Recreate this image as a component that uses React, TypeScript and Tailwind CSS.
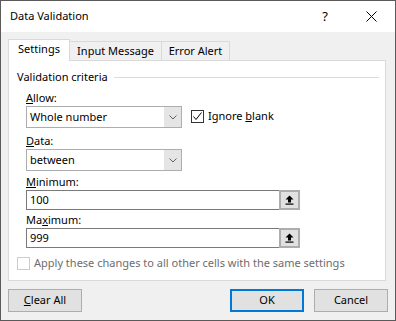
import React from "react";

const font = { fontFamily: '"Noto Sans", "Open Sans", sans-serif' };

function Chevron() {
  return (
    <svg width="8" height="5" viewBox="0 0 8 5" className="block">
      <polyline points="0.5,0.5 4,4 7.5,0.5" fill="none" stroke="#606060" strokeWidth="1" />
    </svg>
  );
}

function Select({ value }: { value: string }) {
  return (
    <div className="w-[156px] h-[22px] border border-[#adadad] bg-white flex">
      <div className="flex-1 pl-[3px] flex items-center text-[11px] leading-[16px] text-black">{value}</div>
      <div className="w-[17px] bg-[#e5e5e5] flex items-center justify-center">
        <Chevron />
      </div>
    </div>
  );
}

function RangeInput({ value }: { value: string }) {
  return (
    <div className="w-[274px] h-[20px] border border-[#7a7a7a] bg-white flex">
      <div className="flex-1 pl-[3px] flex items-center text-[11px] leading-[16px] text-black">{value}</div>
      <div className="w-[21px] -my-px -mr-px border-2 border-[#adadad] bg-[#e1e1e1] flex items-center justify-center">
        <svg width="9" height="10" viewBox="0 0 9 10" className="block">
          <polygon points="4.5,0.5 8.5,4.5 6,4.5 6,7.5 3,7.5 3,4.5 0.5,4.5" fill="#000" />
          <rect x="0.5" y="8.5" width="8" height="1.2" fill="#000" />
        </svg>
      </div>
    </div>
  );
}

function Label({ children, className = "" }: { children: React.ReactNode; className?: string }) {
  return <div className={`h-[16px] leading-[16px] text-[11px] text-black ${className}`}>{children}</div>;
}

function Btn({ children, primary = false }: { children: React.ReactNode; primary?: boolean }) {
  return (
    <div
      className={`w-[74px] h-[23px] flex items-center justify-center text-[11px] text-black bg-[#e1e1e1] ${
        primary ? "border-2 border-[#0078d7]" : "border border-[#adadad]"
      }`}
    >
      {children}
    </div>
  );
}

export default function App() {
  return (
    <div style={font} className="w-[396px] h-[321px] flex flex-col border border-[#5a5a5a] bg-[#f0f0f0] overflow-hidden">
      {/* Title bar */}
      <div className="h-[31px] bg-white flex items-center pl-[9px] shrink-0">
        <span className="text-[11px] text-black">Data Validation</span>
        <span className="ml-auto text-[13px] text-black mr-[38px]">?</span>
        <svg width="11" height="11" viewBox="0 0 11 11" className="mr-[18px] block">
          <line x1="0.5" y1="0.5" x2="10.5" y2="10.5" stroke="#000" strokeWidth="1" />
          <line x1="10.5" y1="0.5" x2="0.5" y2="10.5" stroke="#000" strokeWidth="1" />
        </svg>
      </div>

      {/* Body */}
      <div className="flex-1 px-[7px] pt-[7px] flex flex-col">
        {/* Tabs */}
        <div className="h-[21px] flex items-end">
          <div className="relative z-10 w-[62px] h-[22px] -mb-px bg-white border-l border-t border-r border-[#d9d9d9] flex items-center justify-center text-[11px] text-black pb-[2px]">
            Settings
          </div>
          <div className="w-[92px] h-[19px] border-t border-r border-[#d9d9d9] flex items-center justify-center text-[11px] text-black">
            Input Message
          </div>
          <div className="w-[68px] h-[19px] border-t border-r border-[#d9d9d9] flex items-center justify-center text-[11px] text-black">
            Error Alert
          </div>
        </div>

        {/* Panel */}
        <div className="w-[378px] h-[221px] border border-[#d9d9d9] bg-white flex flex-col pt-[8px]">
          <div className="flex items-center pl-[8px] pr-[6px] h-[16px]">
            <span className="text-[11px] leading-[16px] text-black">Validation criteria</span>
            <div className="flex-1 h-px bg-[#dcdcdc] ml-[6px]" />
          </div>

          <div className="pl-[17px] flex flex-col">
            <Label className="mt-[5px]">
              <u>A</u>llow:
            </Label>
            <div className="flex items-start">
              <Select value="Whole number" />
              <div className="ml-[9px] mt-[2px] flex items-center">
                <div className="w-[13px] h-[13px] border border-[#333333] bg-white flex items-center justify-center">
                  <svg width="11" height="11" viewBox="0 0 11 11" className="block">
                    <polyline points="1.5,5.5 4,8.5 9.5,1.5" fill="none" stroke="#000" strokeWidth="1" />
                  </svg>
                </div>
                <span className="ml-[4px] text-[11px] leading-[16px] text-black">
                  Ignore <u>b</u>lank
                </span>
              </div>
            </div>

            <Label className="mt-[5px]">
              <u>D</u>ata:
            </Label>
            <Select value="between" />

            <Label className="mt-[3px]">
              <u>M</u>inimum:
            </Label>
            <RangeInput value="100" />

            <Label className="mt-[2px]">
              Ma<u>x</u>imum:
            </Label>
            <RangeInput value="999" />
          </div>

          <div className="mt-[7px] pl-[8px] flex items-center">
            <div className="w-[13px] h-[13px] border border-[#cccccc] bg-white" />
            <span className="ml-[4px] text-[11px] leading-[16px] text-[#6d6d6d]">
              Apply these changes to all other cells with the same settings
            </span>
          </div>
        </div>

        {/* Buttons */}
        <div className="mt-[8px] flex items-center">
          <Btn>
            <span>
              <u>C</u>lear All
            </span>
          </Btn>
          <div className="ml-auto flex gap-[10px]">
            <Btn primary>OK</Btn>
            <Btn>Cancel</Btn>
          </div>
        </div>
      </div>
    </div>
  );
}
